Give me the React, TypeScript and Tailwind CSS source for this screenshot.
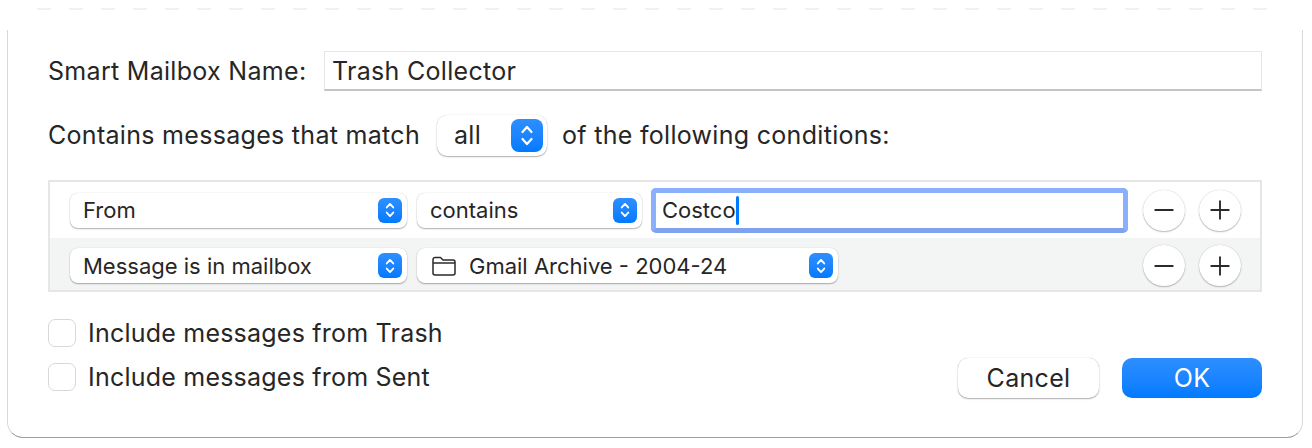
import React from "react";
import { Minus, Plus } from "lucide-react";

const Stepper = ({ small = false }: { small?: boolean }) => (
  <span
    className={`flex items-center justify-center bg-gradient-to-b from-[#2d8fff] to-[#007aff] ${
      small ? "h-[25px] w-[24px] rounded-[6px]" : "h-[33px] w-[32px] rounded-[8px]"
    }`}
  >
    <svg width={small ? 12 : 16} height={small ? 18 : 25} viewBox="0 0 16 25" fill="none" stroke="#fff" strokeWidth={small ? 2.6 : 2.2} strokeLinecap="round" strokeLinejoin="round">
      <path d="M3.5 9 8 4l4.5 5" />
      <path d="M3.5 16 8 21l4.5-5" />
    </svg>
  </span>
);

const Select = ({
  label,
  widthClass,
  folder = false,
}: {
  label: string;
  widthClass: string;
  folder?: boolean;
}) => (
  <div className={`flex h-[35px] shrink-0 items-center justify-between rounded-[8px] bg-white pl-[13px] pr-[5px] text-[22px] tracking-normal shadow-[0_0_1px_rgba(0,0,0,0.2),0_1px_1.5px_rgba(0,0,0,0.3)] ${widthClass}`}>
    <span className="flex items-center gap-[13px]">
      {folder && (
        <svg className="ml-[2px]" width="24" height="20" viewBox="0 0 24 20" fill="none" stroke="#2a2a2a" strokeWidth="1.5" strokeLinejoin="round">
          <path d="M1 5V3.500A2 2 0 0 1 3 1.500h5.500l2.500 2.500h10a2 2 0 0 1 2 2V17a2 2 0 0 1-2 2H3a2 2 0 0 1-2-2V5Z" />
          <path d="M1 7h22" />
        </svg>
      )}
      {label}
    </span>
    <Stepper small />
  </div>
);

const RoundButton = ({ kind }: { kind: "minus" | "plus" }) => (
  <button className="flex h-[41px] w-[42px] items-center justify-center rounded-full bg-white text-[#2a2a2a] shadow-[0_0_1px_rgba(0,0,0,0.25),0_1px_1.5px_rgba(0,0,0,0.25)]">
    {kind === "minus" ? <Minus size={30} strokeWidth={1.5} /> : <Plus size={30} strokeWidth={1.5} />}
  </button>
);

const Checkbox = ({ label }: { label: string }) => (
  <label className="flex items-center gap-[12px] tracking-[0.22px]">
    <span className="h-[28px] w-[28px] rounded-[7px] border border-[#d8d8d8] bg-white" />
    {label}
  </label>
);

export default function App() {
  return (
    <div className="flex h-[448px] w-[1312px] flex-col overflow-hidden bg-white pl-[7px] pr-[9px] text-[25px] leading-none tracking-[0.3px] text-[#262626] [font-family:Inter,'Liberation_Sans',sans-serif]">
      <div className="mx-[30px] mt-[8px] h-[2px] bg-[repeating-linear-gradient(90deg,#f1f1f1_0_14px,transparent_14px_32px)]" />
      <div className="mt-[20px] flex h-[408px] flex-col rounded-b-[16px] border-x border-b border-x-[#d8d8d8] border-b-[#a0a0a0] bg-white pl-[40px] pr-[40px] pt-[21px]">
        <div className="flex items-center">
          <span className="w-[276px]">Smart Mailbox Name:</span>
          <div className="flex h-[40px] flex-1 items-center border border-b-2 border-[#e6e6e6] border-b-[#c4c4c4] pl-[7px] pt-[1px]">
            Trash Collector
          </div>
        </div>

        <div className="mt-[24px] flex items-center">
          <span>Contains messages that match</span>
          <div className="ml-[17px] flex h-[41px] w-[110px] items-center justify-between rounded-[10px] bg-white pl-[17px] pr-[4px] shadow-[0_0_1px_rgba(0,0,0,0.2),0_1px_1.5px_rgba(0,0,0,0.3)]">
            all
            <Stepper />
          </div>
          <span className="ml-[15px]">of the following conditions:</span>
        </div>

        <div className="mt-[24px] flex flex-col border-2 border-[#e6e6e6] text-[22px]">
          <div className="flex h-[56px] items-center bg-white pl-[20px] pr-[19px]">
            <Select label="From" widthClass="w-[337px]" />
            <div className="ml-[10px]">
              <Select label="contains" widthClass="w-[225px]" />
            </div>
            <div className="ml-[9px] flex h-[45px] w-[477px] items-center rounded-[5px] border-[5px] border-[#8bb0fb] border-b-[#7fa3ee] bg-white pl-[6px] tracking-normal">
              Costco
              <span className="h-[29px] w-[3px] rounded-full bg-[#007aff]" />
            </div>
            <div className="ml-auto flex gap-[14px]">
              <RoundButton kind="minus" />
              <RoundButton kind="plus" />
            </div>
          </div>
          <div className="flex h-[52px] items-center bg-[#f3f4f4] pl-[20px] pr-[19px] pt-[3px]">
            <Select label="Message is in mailbox" widthClass="w-[337px]" />
            <div className="ml-[10px]">
              <Select label="Gmail Archive - 2004-24" widthClass="w-[421px]" folder />
            </div>
            <div className="ml-auto flex gap-[14px]">
              <RoundButton kind="minus" />
              <RoundButton kind="plus" />
            </div>
          </div>
        </div>

        <div className="mt-[27px] flex items-end justify-between">
          <div className="flex flex-col gap-[16px] pb-[7px]">
            <Checkbox label="Include messages from Trash" />
            <Checkbox label="Include messages from Sent" />
          </div>
          <div className="flex gap-[23px]">
            <button className="h-[40px] w-[141px] rounded-[10px] bg-white shadow-[0_0_1px_rgba(0,0,0,0.3),0_1px_1.5px_rgba(0,0,0,0.3)]">
              Cancel
            </button>
            <button className="h-[40px] w-[140px] rounded-[10px] bg-gradient-to-b from-[#2d8fff] to-[#007aff] text-white">
              OK
            </button>
          </div>
        </div>
      </div>
    </div>
  );
}
